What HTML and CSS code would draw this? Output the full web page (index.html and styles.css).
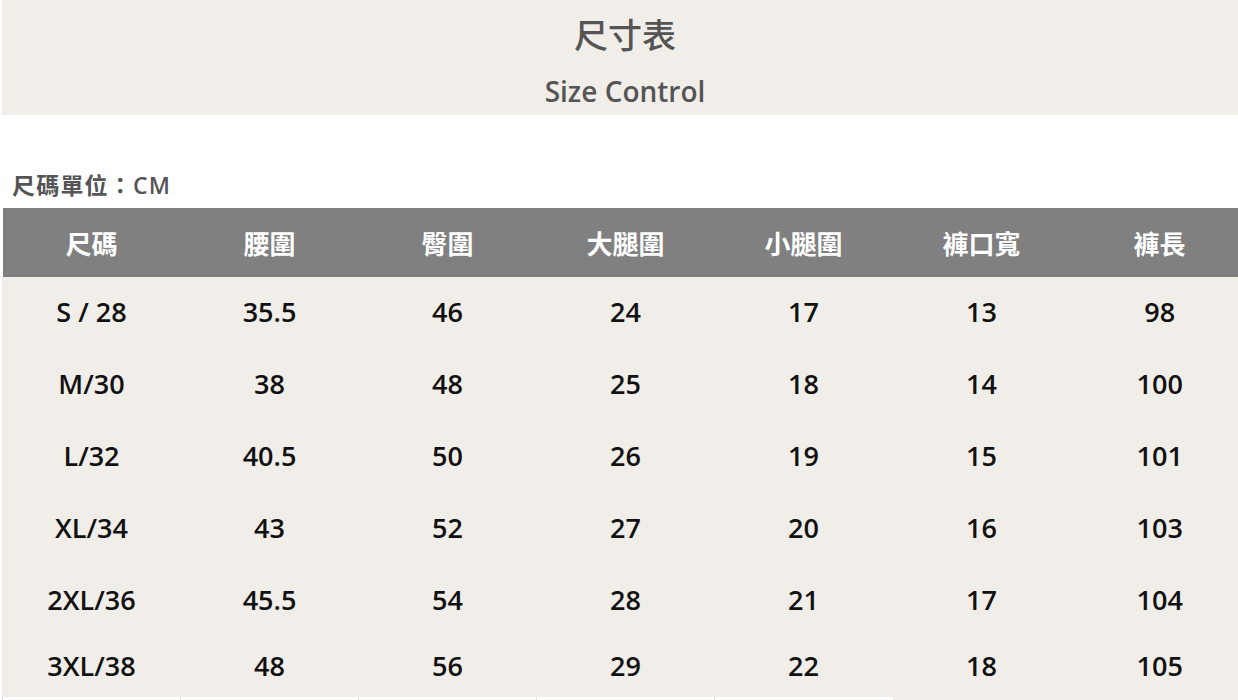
FILE: index.html
```html
<!DOCTYPE html>
<html lang="zh-Hant">
<head>
<meta charset="utf-8">
<title>尺寸表</title>
<link rel="stylesheet" href="styles.css">
</head>
<body>
<div class="page">
  <header class="band">
    <h1 class="title">尺寸表</h1>
    <p class="subtitle">Size Control</p>
  </header>
  <p class="unit">尺碼單位：CM</p>
  <div class="table-wrap">
    <table class="size-table">
      <thead>
        <tr><th>尺碼</th><th>腰圍</th><th>臀圍</th><th>大腿圍</th><th>小腿圍</th><th>褲口寬</th><th>褲長</th></tr>
      </thead>
      <tbody>
        <tr><td>S / 28</td><td>35.5</td><td>46</td><td>24</td><td>17</td><td>13</td><td>98</td></tr>
        <tr><td>M/30</td><td>38</td><td>48</td><td>25</td><td>18</td><td>14</td><td>100</td></tr>
        <tr><td>L/32</td><td>40.5</td><td>50</td><td>26</td><td>19</td><td>15</td><td>101</td></tr>
        <tr><td>XL/34</td><td>43</td><td>52</td><td>27</td><td>20</td><td>16</td><td>103</td></tr>
        <tr><td>2XL/36</td><td>45.5</td><td>54</td><td>28</td><td>21</td><td>17</td><td>104</td></tr>
        <tr class="last"><td>3XL/38</td><td>48</td><td>56</td><td>29</td><td>22</td><td>18</td><td>105</td></tr>
        <tr class="tail"><td></td><td></td><td></td><td></td><td></td><td class="fill"></td><td class="fill"></td></tr>
      </tbody>
    </table>
  </div>
</div>
</body>
</html>
```

FILE: styles.css
```css
html, body {
  margin: 0;
  padding: 0;
  background: #ffffff;
  overflow: hidden;
}
.page {
  width: 1238px;
  height: 700px;
  overflow: hidden;
  padding-left: 2px;
  box-sizing: border-box;
  font-family: "Open Sans", "Noto Sans CJK TC", sans-serif;
}
.band {
  width: 1246px;
  background: #f1eee9;
  height: 115px;
  display: flex;
  flex-direction: column;
  align-items: center;
  box-sizing: border-box;
  padding-top: 11px;
}
.title {
  margin: 0;
  font-family: "Noto Sans CJK TC", sans-serif;
  font-size: 34px;
  font-weight: 500;
  line-height: 46px;
  color: #555555;
}
.subtitle {
  margin: 17px 0 0;
  font-size: 28px;
  font-weight: 600;
  line-height: 34px;
  color: #555555;
}
.unit {
  margin: 55px 0 0 10px;
  height: 38px;
  font-family: "Open Sans", "Noto Sans CJK TC", sans-serif;
  font-size: 23px;
  font-weight: 600;
  line-height: 30px;
  color: #555555;
  letter-spacing: 1.2px;
}
.table-wrap {
  width: 1246px;
}
.size-table {
  border-collapse: collapse;
  table-layout: fixed;
  width: 1246px;
}
.size-table th,
.size-table td {
  width: 178px;
  padding: 0;
  text-align: center;
}
.size-table thead th {
  background: #808080;
  color: #ffffff;
  height: 69px;
  font-family: "Noto Sans CJK TC", sans-serif;
  font-size: 26px;
  font-weight: 700;
}
.size-table tbody td {
  background: #f1eee9;
  color: #111111;
  height: 72px;
  box-sizing: border-box;
  padding-bottom: 3px;
  font-size: 27px;
  font-weight: 600;
  border-left: 1px solid #efebe6;
}
.size-table tbody tr.last td {
  height: 60px;
}
.size-table tbody tr.tail td {
  height: 20px;
  padding: 0;
  background: #ffffff;
  border-left: 1px solid #dddddd;
}
.size-table tbody tr.tail td.fill {
  background: #f1eee9;
  border-left: none;
}
```
